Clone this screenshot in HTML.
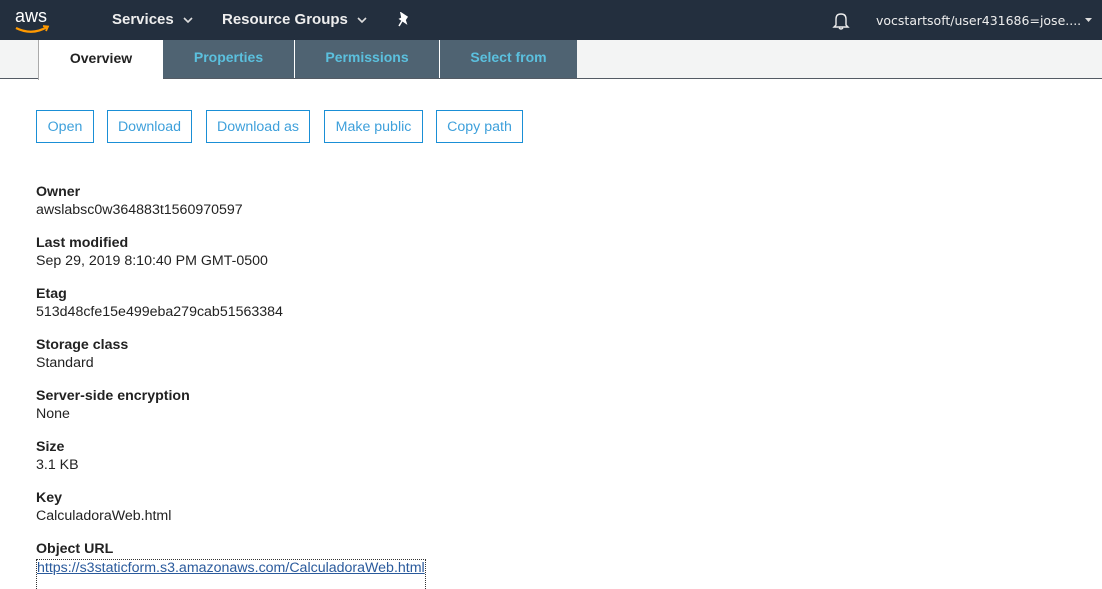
<!DOCTYPE html>
<html><head><style>
*{margin:0;padding:0;box-sizing:border-box}
body{width:1102px;height:586px;overflow:hidden;background:#fff;font-family:"Liberation Sans",sans-serif;position:relative}
.hdr{position:absolute;left:0;top:0;width:1102px;height:40px;background:#232f3e;color:#fff}
.hdr .t{position:absolute;top:11px;font-size:15px;font-weight:bold;color:#eee}
.tabs{position:absolute;left:0;top:40px;width:1102px;height:39px;background:#f3f4f4;border-bottom:1px solid #545b64}
.tab{position:absolute;top:0;height:38px;background:#4f6372;color:#5bc0de;font-weight:bold;font-size:14px;text-align:center;line-height:34px;border-right:1px solid #fff}
.ov{position:absolute;left:38px;top:40px;width:125px;height:40px;background:#fff;border-left:1px solid #aaa;font-weight:bold;font-size:14px;color:#222;text-align:center;line-height:36px}
.btn{position:absolute;top:110px;height:33px;border:1px solid #1a8fd6;color:#3ea0db;font-size:14.2px;line-height:33px;text-align:center}
.f{position:absolute;left:36px;font-size:14.2px;color:#222}
.f b{display:block;height:18px}
.f span{display:block}
</style></head><body>
<div class="hdr">
<svg style="position:absolute;left:14px;top:6px" width="38" height="28" viewBox="0 0 38 28"><text x="1" y="16" font-family="Liberation Sans" font-size="18" fill="#fff">aws</text><path d="M2 22 Q18 30 33 21" stroke="#f90" stroke-width="2.2" fill="none"/><path d="M29 20 L34 20.5 L32 25" stroke="#f90" stroke-width="1.8" fill="none"/></svg>
<div class="t" style="left:112px">Services</div>
<svg style="position:absolute;left:183px;top:17px" width="10" height="7"><path d="M1 1 L5 5 L9 1" stroke="#ddd" stroke-width="1.6" fill="none"/></svg>
<div class="t" style="left:222px">Resource Groups</div>
<svg style="position:absolute;left:357px;top:17px" width="10" height="7"><path d="M1 1 L5 5 L9 1" stroke="#ddd" stroke-width="1.6" fill="none"/></svg>
<svg style="position:absolute;left:397px;top:12px" width="14" height="16"><path d="M4 1 L10 5 L8 8 L9 11 L3 7 L5 6 Z M5 9 L2 14" stroke="#fff" stroke-width="1.5" fill="#fff"/></svg>
<svg style="position:absolute;left:832px;top:11px" width="18" height="19"><path d="M4 14 L4 8 Q4 3 9 3 Q14 3 14 8 L14 14 L16 16 L2 16 Z M7 17 Q9 19 11 17" stroke="#eee" stroke-width="1.4" fill="none"/></svg>
<div style="position:absolute;left:876px;top:13px;font-family:'DejaVu Sans',sans-serif;font-size:12.5px;color:#eee">vocstartsoft/user431686=jose....</div>
<svg style="position:absolute;left:1084px;top:17px" width="9" height="6"><path d="M1 1 L4.5 5 L8 1 Z" fill="#ddd"/></svg>
</div>
<div class="tabs">
<div class="tab" style="left:163px;width:132px">Properties</div>
<div class="tab" style="left:295px;width:145px">Permissions</div>
<div class="tab" style="left:440px;width:137px;border-right:none">Select from</div>
</div>
<div class="ov">Overview</div>
<div class="btn" style="left:36px;width:58px">Open</div>
<div class="btn" style="left:107px;width:85px">Download</div>
<div class="btn" style="left:206px;width:104px">Download as</div>
<div class="btn" style="left:324px;width:99px">Make public</div>
<div class="btn" style="left:436px;width:87px">Copy path</div>
<div class="f" style="top:184px"><b>Owner</b><span>awslabsc0w364883t1560970597</span></div>
<div class="f" style="top:235px"><b>Last modified</b><span>Sep 29, 2019 8:10:40 PM GMT-0500</span></div>
<div class="f" style="top:286px"><b>Etag</b><span>513d48cfe15e499eba279cab51563384</span></div>
<div class="f" style="top:337px"><b>Storage class</b><span>Standard</span></div>
<div class="f" style="top:388px"><b>Server-side encryption</b><span>None</span></div>
<div class="f" style="top:439px"><b>Size</b><span>3.1 KB</span></div>
<div class="f" style="top:490px"><b>Key</b><span>CalculadoraWeb.html</span></div>
<div class="f" style="top:541px"><b>Object URL</b><span style="color:#2a5a9c;text-decoration:underline;border:1px dotted #333;border-bottom:none;display:inline-block;height:30px">https://s3staticform.s3.amazonaws.com/CalculadoraWeb.html</span></div>
</body></html>
